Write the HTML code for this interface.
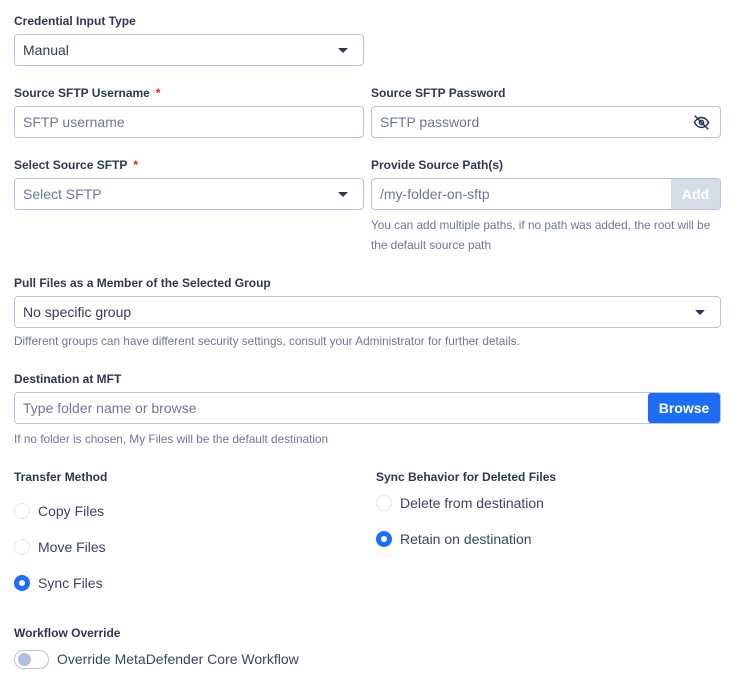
<!DOCTYPE html>
<html><head><meta charset="utf-8"><style>
*{box-sizing:border-box;margin:0;padding:0}
body{width:738px;height:685px;background:#fff;font-family:"Liberation Sans",Arial,sans-serif;position:relative;overflow:hidden;color:#3a4560}
.a{position:absolute;white-space:nowrap}
.lb{font-size:12px;font-weight:bold;color:#2f3850;line-height:16px}
.req{color:#e02424;margin-left:6px}
.box{position:absolute;border:1px solid #b9c3dc;border-radius:4px;height:32px;background:#fff}
.tx{position:absolute;left:8px;top:7px;font-size:14px;line-height:17px}
.ph{color:#6c7895}
.v{color:#333d57}
.car{position:absolute;right:15px;top:13px;width:0;height:0;border-left:5px solid transparent;border-right:5px solid transparent;border-top:5px solid #2f3850}
.help{font-size:11.8px;color:#6c7895;line-height:20px}
.r{position:absolute;width:16px;height:16px;border-radius:50%;border:1.5px solid #e2e6ef;background:#fff}
.r.on{border:none;background:#1e6ef4}
.r.on::after{content:"";position:absolute;left:5px;top:5px;width:6px;height:6px;border-radius:50%;background:#fff}
.rt{font-size:14px;color:#3a4560;line-height:17px}
</style></head><body>
<div class="a lb" style="left:14px;top:13px">Credential Input Type</div>
<div class="box" style="left:14px;top:34px;width:350px"><span class="tx v">Manual</span><span class="car"></span></div>

<div class="a lb" style="left:14px;top:85px">Source SFTP Username<span class="req">*</span></div>
<div class="box" style="left:14px;top:106px;width:350px"><span class="tx ph">SFTP username</span></div>

<div class="a lb" style="left:371px;top:85px">Source SFTP Password</div>
<div class="box" style="left:371px;top:106px;width:350px"><span class="tx ph">SFTP password</span>
<svg style="position:absolute;right:10px;top:7px" width="17" height="17" viewBox="0 0 24 24" fill="none" stroke="#2f3850" stroke-width="2.2" stroke-linecap="round"><path d="M2 12s3.5-7 10-7 10 7 10 7-3.5 7-10 7S2 12 2 12z"/><circle cx="12" cy="12" r="3"/><path d="M3 3l18 18"/></svg></div>

<div class="a lb" style="left:14px;top:157px">Select Source SFTP<span class="req">*</span></div>
<div class="box" style="left:14px;top:178px;width:350px"><span class="tx ph">Select SFTP</span><span class="car"></span></div>

<div class="a lb" style="left:371px;top:157px">Provide Source Path(s)</div>
<div class="box" style="left:371px;top:178px;width:350px;overflow:hidden"><span class="tx ph">/my-folder-on-sftp</span>
<div style="position:absolute;right:0;top:0;width:49px;height:30px;background:#d5dbe8;color:#fff;font-weight:bold;font-size:14px;text-align:center;line-height:30px">Add</div></div>
<div class="a help" style="left:371px;top:215px">You can add multiple paths, if no path was added, the root will be</div>
<div class="a help" style="left:371px;top:235px">the default source path</div>

<div class="a lb" style="left:14px;top:275px">Pull Files as a Member of the Selected Group</div>
<div class="box" style="left:14px;top:296px;width:707px"><span class="tx v">No specific group</span><span class="car"></span></div>
<div class="a help" style="left:14px;top:331px">Different groups can have different security settings, consult your Administrator for further details.</div>

<div class="a lb" style="left:14px;top:371px">Destination at MFT</div>
<div class="box" style="left:14px;top:392px;width:707px;overflow:hidden"><span class="tx ph">Type folder name or browse</span>
<div style="position:absolute;right:0;top:0;width:72px;height:30px;background:#1e6ef4;color:#fff;font-weight:bold;font-size:14px;text-align:center;line-height:30px;border-radius:3px">Browse</div></div>
<div class="a help" style="left:14px;top:429px">If no folder is chosen, My Files will be the default destination</div>

<div class="a lb" style="left:14px;top:469px">Transfer Method</div>
<div class="r" style="left:14px;top:503px"></div><div class="a rt" style="left:38px;top:503px">Copy Files</div>
<div class="r" style="left:14px;top:539px"></div><div class="a rt" style="left:38px;top:539px">Move Files</div>
<div class="r on" style="left:14px;top:575px"></div><div class="a rt" style="left:38px;top:575px">Sync Files</div>

<div class="a lb" style="left:376px;top:469px">Sync Behavior for Deleted Files</div>
<div class="r" style="left:376px;top:495px"></div><div class="a rt" style="left:400px;top:495px">Delete from destination</div>
<div class="r on" style="left:376px;top:531px"></div><div class="a rt" style="left:400px;top:531px">Retain on destination</div>

<div class="a lb" style="left:14px;top:625px">Workflow Override</div>
<div style="position:absolute;left:14px;top:650px;width:35px;height:19px;border:1px solid #b9c3dc;border-radius:10px;background:#fff"><div style="position:absolute;left:3px;top:2px;width:13px;height:13px;border-radius:50%;background:#b3bedb"></div></div>
<div class="a rt" style="left:57px;top:651px">Override MetaDefender Core Workflow</div>
</body></html>
